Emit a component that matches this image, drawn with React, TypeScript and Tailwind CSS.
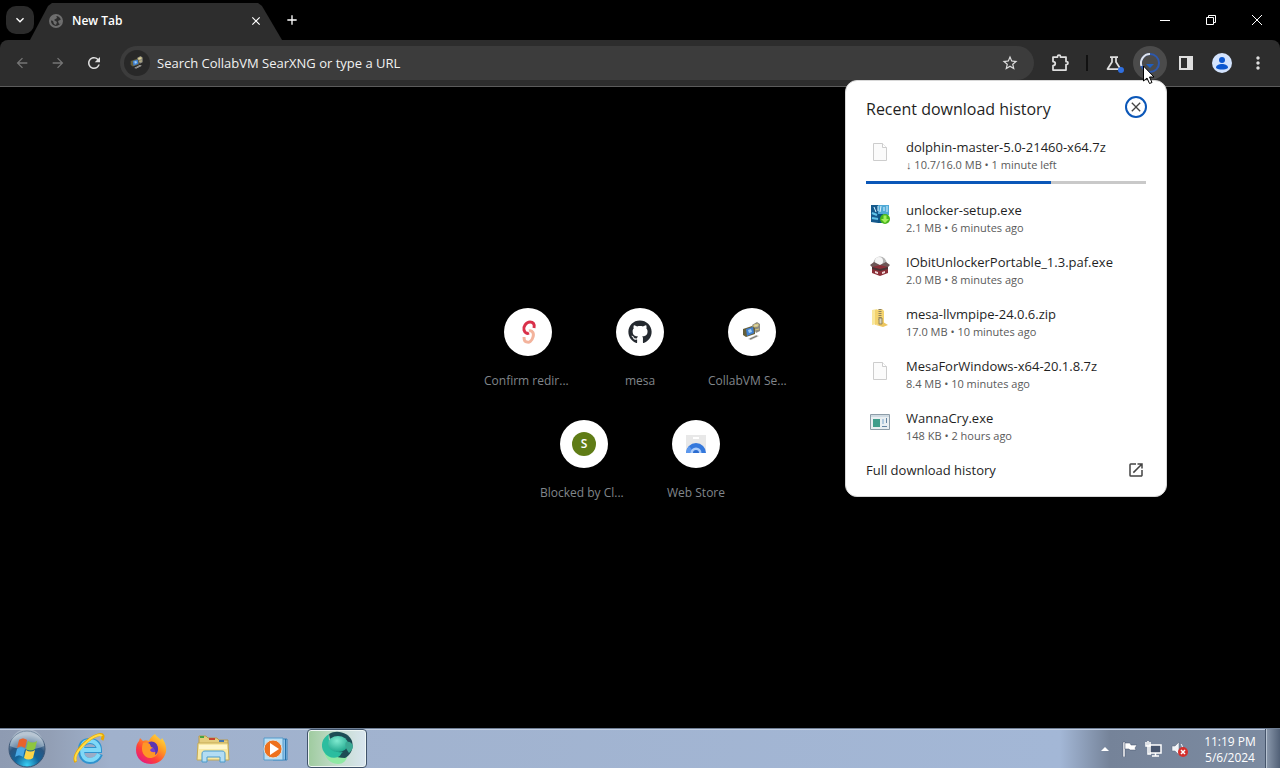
import type { ReactNode } from "react";
import { FaGithub } from "react-icons/fa";
import {
  MdAdd,
  MdArrowBack,
  MdArrowForward,
  MdClose,
  MdExpandMore,
  MdMoreVert,
  MdOpenInNew,
  MdRefresh,
  MdStarBorder,
} from "react-icons/md";

function ComputerLogo({ className }: { className: string }) {
  return (
    <svg viewBox="0 0 20 20" className={className} aria-hidden="true">
      <path d="M10 3l5-3 3 2v7l-4 2z" fill="#8d8b80" />
      <path d="M12 3l4-1v2l-4 1zM13 8l4-1" fill="#d8d3bb" stroke="#d5c77e" />
      <path d="M1 7l9-3 3 2v6l-9 3-3-2z" fill="#655f3a" />
      <path d="M4 7l7-2 1 6-7 3z" fill="#3f7fd2" />
      <path d="M6 8l3-1 1 3-3 1z" fill="#9fd0f4" />
      <path d="M6 17l8-4 3 1-8 4z" fill="#b9b8b3" />
      <path d="M8 17l7-3" stroke="#77766f" />
    </svg>
  );
}

function PageIcon() {
  return (
    <svg viewBox="0 0 20 20" className="size-5" aria-hidden="true">
      <path d="M3.500 2.500h9l4 4v13h-13z" fill="#fbfbfb" stroke="#cdcdcd" />
      <path d="M12.500 2.500v4h4" fill="#fff" stroke="#cdcdcd" />
    </svg>
  );
}

function SetupIcon() {
  return (
    <svg viewBox="0 0 20 20" className="size-5" aria-hidden="true">
      <path d="M1 1h7v18l-7-1z" fill="#155a8d" />
      <path d="M8 1h11v10H8z" fill="#4fa9d6" />
      <path d="M8 10h5v9H8z" fill="#0d5484" />
      <path d="M4 3l2 5M8 2v5M11 2l-1 6M14 3v4M17 2v6" stroke="#d8f2ff" />
      <path d="M2 9l5 2M2 14l6 1" stroke="#60c3e9" strokeWidth="2" />
      <circle cx="15" cy="15" r="5" fill="#48b61c" />
      <path d="M13.500 11.500h3V15H19l-4 4-4-4h2.500z" fill="#a3ef5c" />
    </svg>
  );
}

function BoxIcon() {
  return (
    <svg viewBox="0 0 20 20" className="size-5" aria-hidden="true">
      <circle cx="10" cy="7" r="6.500" fill="#b4b4b4" />
      <circle cx="9" cy="5" r="4" fill="#f5f5f5" />
      <path d="M0 9l4-3 6 3 6-3 4 3-3 3-7-2-7 2z" fill="#6d5656" />
      <path d="M2 11l8-2 8 2v6l-8 3-8-3z" fill="#8b2f38" />
      <path d="M2 11l8 2 8-2v2l-8 2-8-2z" fill="#463233" />
      <path d="M5 15l3 1v2l-3-1zM12 16l3-1v2l-3 1z" fill="#efd7d8" />
    </svg>
  );
}

function ZipIcon() {
  return (
    <svg viewBox="0 0 20 20" className="size-5" aria-hidden="true">
      <path d="M2 2l5-1v15l-5 1z" fill="#f9e79c" />
      <path d="M5 2l7-1 2 2v12l-9 2z" fill="#f3d36f" />
      <path d="M13 14l5 3-5 2-7-2z" fill="#edc65f" />
      <path d="M10 1v12" stroke="#8d8060" strokeWidth="3" strokeDasharray="1 1" />
      <path d="M9 10h3v6H9z" fill="#d7d2bd" stroke="#958455" />
    </svg>
  );
}

function ProgramIcon() {
  return (
    <svg viewBox="0 0 20 20" className="size-5" aria-hidden="true">
      <path d="M.5 2.500h19v15H.5z" fill="#e9eff2" stroke="#8d9da8" />
      <path d="M1 3h18v2H1z" fill="#cfdae2" />
      <path d="M3 7h7v8H3z" fill="#3f9d8b" />
      <path d="M12 7h2v5h-2z" fill="#b2cbdf" />
      <path d="M16.500 6v5M12 14.500h5" stroke="#6586a4" />
    </svg>
  );
}

type Download = {
  name: string;
  detail: string;
  icon: ReactNode;
  progress?: number;
};

const downloads: Download[] = [
  {
    name: "dolphin-master-5.0-21460-x64.7z",
    detail: "↓ 10.7/16.0 MB • 1 minute left",
    icon: <PageIcon />,
    progress: 66,
  },
  { name: "unlocker-setup.exe", detail: "2.1 MB • 6 minutes ago", icon: <SetupIcon /> },
  { name: "IObitUnlockerPortable_1.3.paf.exe", detail: "2.0 MB • 8 minutes ago", icon: <BoxIcon /> },
  { name: "mesa-llvmpipe-24.0.6.zip", detail: "17.0 MB • 10 minutes ago", icon: <ZipIcon /> },
  { name: "MesaForWindows-x64-20.1.8.7z", detail: "8.4 MB • 10 minutes ago", icon: <PageIcon /> },
  { name: "WannaCry.exe", detail: "148 KB • 2 hours ago", icon: <ProgramIcon /> },
];

const shortcuts: { label: string; icon: ReactNode; clipped?: boolean }[] = [
  {
    label: "Confirm redir...",
    clipped: true,
    icon: (
      <svg viewBox="0 0 24 24" className="size-6" fill="none" strokeWidth="3" aria-hidden="true">
        <path d="M13 11c4-1 5 3 4 6-1 4-4 6-6 5-2 0-3-2-3-5" stroke="#f3b39c" />
        <path d="M18 8c1-4-1-6-4-6-4 0-7 5-6 8 1 3 3 4 5 3" stroke="#d9304a" />
      </svg>
    ),
  },
  { label: "mesa", icon: <FaGithub className="size-6 text-[#24292f]" /> },
  { label: "CollabVM Se...", clipped: true, icon: <ComputerLogo className="size-5" /> },
  {
    label: "Blocked by Cl...",
    clipped: true,
    icon: (
      <span className="grid size-6 place-items-center rounded-full bg-[#5f7c16] text-xs font-semibold text-white">
        S
      </span>
    ),
  },
  {
    label: "Web Store",
    icon: (
      <svg viewBox="0 0 20 20" className="size-5" aria-hidden="true">
        <path d="M0 1h20v18H0z" fill="#e8e8e8" />
        <path d="M7 4h6" stroke="#fff" strokeWidth="2" />
        <path d="M0 19a10 10 0 0 1 20 0z" fill="#3478dc" />
        <path d="M0 19a10 10 0 0 1 3-7l4 5v2z" fill="#5c98ee" />
        <path d="M4.500 19a5.500 5.500 0 0 1 11 0z" fill="#a9cbfa" />
        <path d="M7 19a3 3 0 0 1 6 0z" fill="#2b6cd0" />
      </svg>
    ),
  },
];

function TabStrip() {
  return (
    <header className="flex h-10 items-center bg-black pl-1.5">
      <button
        aria-label="Search tabs"
        className="grid size-7 place-items-center rounded-[10px] bg-[#2b2b2b] text-white"
      >
        <MdExpandMore className="size-4 stroke-white" />
      </button>
      <div className="-ml-1 flex h-full w-[252px] items-end">
        <div className="flex h-[37px] w-full items-center bg-[#2d2d2d] pr-[19px] pb-0.5 pl-[18px] [clip-path:polygon(0_100%,18px_3px,22px_0,228px_0,232px_3px,100%_100%)]">
          <svg viewBox="0 0 16 16" className="size-4" aria-hidden="true">
            <circle cx="8" cy="8" r="6" fill="#2d2d2d" stroke="#6e6e6e" strokeWidth="2" />
            <path d="M3 4l5-2 1 3-3 2 3 2-1 3-2-1-1-3-3-1zM10 8l4-2v4l-3 1z" fill="#6e6e6e" />
          </svg>
          <span className="ml-2 flex-1 text-xs font-semibold text-white">New Tab</span>
          <button aria-label="Close tab" className="text-white">
            <MdClose className="size-3.5" />
          </button>
        </div>
      </div>
      <button aria-label="New tab" className="ml-0.5 text-white">
        <MdAdd className="size-4 stroke-white" />
      </button>
      <div className="ml-auto flex">
        <button aria-label="Minimize" className="grid h-10 w-[46px] place-items-center">
          <svg viewBox="0 0 12 12" className="size-3" aria-hidden="true">
            <path d="M1 6.500h10" stroke="#fff" />
          </svg>
        </button>
        <button aria-label="Restore" className="grid h-10 w-[46px] place-items-center">
          <svg viewBox="0 0 12 12" className="size-3" fill="none" stroke="#fff" aria-hidden="true">
            <path d="M1.500 3.500h7v7h-7zM3.500 3.500v-2h7v7h-2" />
          </svg>
        </button>
        <button aria-label="Close" className="grid h-10 w-[46px] place-items-center">
          <svg viewBox="0 0 12 12" className="size-3" stroke="#fff" aria-hidden="true">
            <path d="M1 1l10 10M11 1L1 11" />
          </svg>
        </button>
      </div>
    </header>
  );
}

function ToolButton({ label, children }: { label: string; children: ReactNode }) {
  return (
    <button aria-label={label} className="relative grid h-9 w-9 shrink-0 place-items-center text-[#dedede]">
      {children}
    </button>
  );
}

function Toolbar() {
  return (
    <nav className="relative flex h-[47px] shrink-0 items-center rounded-t-lg border-b border-[#5c5c5c] bg-[#2d2d2d] px-1">
      <ToolButton label="Back">
        <MdArrowBack className="size-4 text-[#757575]" />
      </ToolButton>
      <ToolButton label="Forward">
        <MdArrowForward className="size-4 text-[#757575]" />
      </ToolButton>
      <ToolButton label="Reload">
        <MdRefresh className="size-[18px] stroke-[#dedede]" />
      </ToolButton>
      <div className="mx-2 flex h-[34px] flex-1 items-center rounded-full bg-[#3c3c3c] pr-[15px] pl-1">
        <span className="grid size-[26px] place-items-center rounded-full bg-[#282828]">
          <ComputerLogo className="size-3.5" />
        </span>
        <input
          aria-label="Address and search bar"
          placeholder="Search CollabVM SearXNG or type a URL"
          className="ml-[7px] min-w-0 flex-1 bg-transparent pt-0.5 text-[13px] text-white outline-none placeholder:text-[#f1f1f1]"
        />
        <button aria-label="Bookmark this tab" className="text-[#dedede]">
          <MdStarBorder className="size-[18px]" />
        </button>
      </div>
      <ToolButton label="Extensions">
        <svg viewBox="0 0 20 20" className="size-5" fill="none" aria-hidden="true">
          <path
            d="M3 4h4.500V3.500a1.500 1.500 0 0 1 3 0V4H16v4.500h.5a1.500 1.500 0 0 1 0 3H16V17H3v-4.500c3 0 3-4 0-4z"
            stroke="#dedede"
            strokeWidth="1.750"
            strokeLinejoin="round"
          />
        </svg>
      </ToolButton>
      <span className="mx-2 h-4 w-0.5 bg-[#111]" />
      <ToolButton label="Experiments">
        <svg viewBox="0 0 16 16" className="size-4" fill="none" stroke="#dedede" strokeWidth="1.750" aria-hidden="true">
          <path d="M4 2h8M6 2v5l-4.500 7h13L10 7V2" strokeLinejoin="round" />
        </svg>
        <span className="absolute right-2 bottom-2 size-1.5 rounded-full bg-[#2f6fe0]" />
      </ToolButton>
      <ToolButton label="Downloads">
        <span className="grid size-[34px] place-items-center rounded-full bg-[#4b4b4b]">
          <svg viewBox="0 0 20 20" className="size-5" fill="none" aria-hidden="true">
            <circle cx="10" cy="10" r="9" stroke="#2d58ad" strokeWidth="2" />
            <path d="M10 1a9 9 0 0 0-8.500 12" stroke="#dfe3ec" strokeWidth="2" />
            <path d="M6 11h8l-4 4z" fill="#1c5fc4" />
          </svg>
        </span>
      </ToolButton>
      <ToolButton label="Side panel">
        <svg viewBox="0 0 16 16" className="size-4" aria-hidden="true">
          <path d="M2 2h12v12H2z" fill="none" stroke="#dedede" strokeWidth="2" />
          <path d="M9 2h5v12H9z" fill="#dedede" />
        </svg>
      </ToolButton>
      <ToolButton label="Profile">
        <svg viewBox="0 0 20 20" className="size-5" aria-hidden="true">
          <circle cx="10" cy="10" r="10" fill="#d3e3fd" />
          <circle cx="10" cy="7" r="3" fill="#0b57d0" />
          <path d="M4 15c0-3 3-4 6-4s6 1 6 4c-3 2-9 2-12 0z" fill="#0b57d0" />
        </svg>
      </ToolButton>
      <ToolButton label="Menu">
        <MdMoreVert className="size-5" />
      </ToolButton>
      <DownloadPanel />
    </nav>
  );
}

function DownloadPanel() {
  return (
    <section className="absolute top-10 right-[113px] z-10 w-[322px] rounded-xl border border-[#d8d8d8] bg-white px-5 pt-[15px] pb-4 text-[#1f1f1f]">
      <div className="-mr-px flex items-start justify-between">
        <h2 className="pt-px text-base leading-6">Recent download history</h2>
        <button
          aria-label="Close downloads"
          className="grid size-[22px] place-items-center rounded-full border-2 border-[#0b57b8] text-[#444]"
        >
          <MdClose className="size-4" />
        </button>
      </div>
      <ul className="mt-4">
        {downloads.map((d) => (
          <li key={d.name} className="mb-4">
            <div className="flex gap-4 pl-1">
              <span className="pt-1">{d.icon}</span>
              <div>
                <a href="#" className="block text-[13px] leading-5">
                  {d.name}
                </a>
                <p className="text-[11px] leading-4 text-[#5a5a5a]">{d.detail}</p>
              </div>
            </div>
            {d.progress && (
              <div className="mt-2 h-[3px] bg-[#c9c9c9]">
                <div className="h-full bg-[#0b57b8]" style={{ width: `${d.progress}%` }} />
              </div>
            )}
          </li>
        ))}
      </ul>
      <a href="#" className="flex items-center justify-between pr-px text-[13px] leading-5">
        Full download history
        <MdOpenInNew className="size-[18px] text-[#444]" />
      </a>
    </section>
  );
}

function NewTabPage() {
  return (
    <main className="flex flex-1 items-center justify-center bg-black pb-2">
      <div className="flex w-[336px] flex-wrap justify-center">
        {shortcuts.map((s) => (
          <a key={s.label} href="#" className="flex h-28 w-28 flex-col items-center pt-4">
            <span className="grid size-12 place-items-center rounded-full bg-white">{s.icon}</span>
            <span
              className={`mt-[15px] w-[88px] text-xs leading-5 whitespace-nowrap text-[#80868b] ${
                s.clipped ? "text-left" : "text-center"
              }`}
            >
              {s.label}
            </span>
          </a>
        ))}
      </div>
    </main>
  );
}

function StartOrb() {
  return (
    <svg viewBox="0 0 38 38" className="size-[38px]" aria-hidden="true">
      <defs>
        <radialGradient id="orb" cx="50%" cy="95%" r="85%">
          <stop offset="0" stopColor="#38d0f5" />
          <stop offset=".4" stopColor="#13649a" />
          <stop offset=".7" stopColor="#2b5680" />
          <stop offset="1" stopColor="#a3b3c4" />
        </radialGradient>
      </defs>
      <circle cx="19" cy="19" r="18" fill="url(#orb)" stroke="#3b5675" />
      <path d="M2 16a17 17 0 0 1 34 0c-8 4-24 5-34 0z" fill="#d7e3ec" opacity=".4" />
      <path d="M11 10c3-2 5-2 8 0l-2 8c-3-2-5-2-8 0z" fill="#e8622c" />
      <path d="M20 11c3 2 6 2 9 0l-2 8c-3 2-6 2-9 0z" fill="#8ec63f" />
      <path d="M9 19c3-2 5-2 8 0l-2 8c-3-2-5-2-8 0z" fill="#49a9e6" />
      <path d="M18 20c3 2 6 2 9 0l-2 8c-3 2-6 2-9 0z" fill="#fdd548" />
    </svg>
  );
}

function ExplorerLogo() {
  return (
    <svg viewBox="0 0 32 32" className="size-8" fill="none" aria-hidden="true">
      <path d="M27 21c-2 5-6 7-10 7-6 0-9-5-9-11S11 8 17 8s9 4 9 9H10" stroke="#2f93cf" strokeWidth="6" />
      <path d="M26 21c-2 4-5 6-9 6-5 0-8-4-8-10s3-9 8-9 9 4 9 9H10" stroke="#7fd8f7" strokeWidth="4" />
      <path d="M3 29C-1 24 7 13 17 6c6-4 12-6 13-3 0 1 0 2-1 4" stroke="#e9a800" strokeWidth="3" />
      <path d="M3 28C0 23 8 13 17 6c6-4 11-5 12-3" stroke="#ffdc45" strokeWidth="2" />
    </svg>
  );
}

function FirefoxLogo() {
  return (
    <svg viewBox="0 0 32 32" className="size-8" aria-hidden="true">
      <defs>
        <linearGradient id="fox" x1="1" y1="0" x2=".2" y2="1">
          <stop offset="0" stopColor="#fff04a" />
          <stop offset=".4" stopColor="#ff9a24" />
          <stop offset=".7" stopColor="#ff4138" />
          <stop offset="1" stopColor="#e31687" />
        </linearGradient>
      </defs>
      <path d="M20 1c1 2 4 4 6 6l1-2c3 4 5 9 4 14-2 8-8 12-15 12C7 31 1 25 1 17c0-4 1-7 3-9l1-3 3 3c2-1 4-1 6 0 1-3 3-5 6-7z" fill="url(#fox)" />
      <circle cx="16" cy="16" r="7" fill="#7540d0" />
      <path d="M8 10c3-1 6 0 8 2l4 1c-1 2-4 2-5 4 1 3 6 3 8 0 0 6-4 8-8 8-6 0-10-7-7-15z" fill="#ff9626" />
      <path d="M14 9c4-2 9 1 9 7 0 3-1 5-3 6 1-4 0-7-4-8z" fill="#5b35b1" />
    </svg>
  );
}

function FolderLogo() {
  return (
    <svg viewBox="0 0 34 32" className="h-8 w-[34px]" aria-hidden="true">
      <path d="M3 5V3h7l2 2h9l2 2h9v5H3z" fill="#e4cd7d" stroke="#b99b4f" />
      <path d="M4 4h4" stroke="#46a443" strokeWidth="2" />
      <path d="M13 6h6" stroke="#c9442f" strokeWidth="2" />
      <path d="M23 8h5" stroke="#4677ae" strokeWidth="2" />
      <path d="M2 10h30l1 17H1z" fill="#f8e9a4" stroke="#c5aa54" />
      <path d="M3 12h28v4H3z" fill="#fff7cc" />
      <path d="M6 29v-8c0-2 1-3 3-3h17c2 0 3 1 3 3v8h-5v-5H11v5z" fill="#b3ddf3" stroke="#4b9bcb" />
    </svg>
  );
}

function PlayerLogo() {
  return (
    <svg viewBox="0 0 28 28" className="size-7" aria-hidden="true">
      <path d="M12 4h14v21H12z" fill="#8dc1e8" stroke="#3d83b9" />
      <path d="M3 3h19v22H3z" fill="#b9dff4" stroke="#559bcb" />
      <path d="M24.500 4v21" stroke="#2571aa" />
      <circle cx="12" cy="14" r="9" fill="#ee711d" stroke="#d9dfdf" />
      <path d="M9 8l9 6-9 6z" fill="#fff" />
    </svg>
  );
}

function SwirlLogo() {
  return (
    <svg viewBox="0 0 34 34" className="size-[34px]" aria-hidden="true">
      <defs>
        <radialGradient id="ball" cx="45%" cy="30%" r="70%">
          <stop offset="0" stopColor="#7fead0" />
          <stop offset="1" stopColor="#22a98f" />
        </radialGradient>
      </defs>
      <path d="M4 18c0 9 7 15 14 15 5 0 8-3 9-7z" fill="#8fe9a4" />
      <path d="M9 3c8-5 20-1 23 7 2 7-1 14-7 17-5 0-9-1-12-3z" fill="#1d4d55" />
      <path d="M9 3C2 7 0 15 4 21c3 5 9 7 14 5 3-1 2-3 5-5-5 1-9-1-11-5C9 12 8 7 9 3z" fill="#2bbd9f" />
      <ellipse cx="18" cy="13" rx="10" ry="8" fill="url(#ball)" />
      <path d="M26 11c4-1 6 1 7 4 0 3-2 5-4 7-2-3-5-7-3-11z" fill="#3aa893" />
    </svg>
  );
}

const pinned = [
  { name: "Internet Explorer", icon: <ExplorerLogo /> },
  { name: "Firefox", icon: <FirefoxLogo /> },
  { name: "Windows Explorer", icon: <FolderLogo /> },
  { name: "Media Player", icon: <PlayerLogo /> },
];

function Taskbar() {
  return (
    <footer className="flex h-10 shrink-0 items-center border-t border-[#6f7f95] bg-[linear-gradient(to_right,#8e9bb2_0,#929fb5_50px,#a0b1cc_110px,#a3b7d6_calc(100%_-_220px),#758399_calc(100%_-_170px),#7c8ba1_100%)] shadow-[inset_0_1px_0_#c3d0e3]">
      <button aria-label="Start" className="grid w-[54px] place-items-center">
        <StartOrb />
      </button>
      <div className="ml-1 flex">
        {pinned.map((p) => (
          <button key={p.name} aria-label={p.name} className="grid h-[39px] w-[62px] place-items-center">
            {p.icon}
          </button>
        ))}
        <button
          aria-label="Browser"
          className="mx-px grid h-[39px] w-[60px] place-items-start justify-center rounded-sm border border-[#40536b] bg-linear-to-r from-[#9ecb9e] via-[#c5dccd] to-[#d9e5f0] pt-px shadow-[inset_0_0_0_1px_#eef6f4]"
        >
          <SwirlLogo />
        </button>
      </div>
      <div className="ml-auto flex h-full items-center">
        <button aria-label="Show hidden icons" className="mr-3">
          <svg viewBox="0 0 8 8" className="size-2" aria-hidden="true">
            <path d="M0 6l4-4 4 4z" fill="#fff" />
          </svg>
        </button>
        <button aria-label="Action center" className="mr-2">
          <svg viewBox="0 0 16 16" className="size-4" aria-hidden="true">
            <path d="M2 1h2v15H2z" fill="#fff" stroke="#45536a" strokeWidth=".5" />
            <path d="M4 2h5l1 2h6l-2 3 1 2H9L8 8H4z" fill="#fff" stroke="#45536a" strokeWidth=".5" />
          </svg>
        </button>
        <button aria-label="Network" className="mr-2">
          <svg viewBox="0 0 18 16" className="h-4 w-[18px]" fill="none" aria-hidden="true">
            <path d="M5 4h11v8H5z" fill="#48566e" stroke="#fff" strokeWidth="1.500" />
            <path d="M7 15h7M10.500 12v3M1 1v4h4V1M3 0v13h3" stroke="#fff" strokeWidth="1.500" />
          </svg>
        </button>
        <button aria-label="Volume" className="mr-2">
          <svg viewBox="0 0 18 16" className="h-4 w-[18px]" aria-hidden="true">
            <path d="M1 5h3l4-4v13l-4-4H1z" fill="#f2f4f7" stroke="#5b6678" strokeWidth=".5" />
            <path d="M10 3c2 2 2 7 0 9" fill="none" stroke="#fff" />
            <circle cx="12" cy="11" r="5" fill="#d4302d" />
            <path d="M10 9l4 4M14 9l-4 4" stroke="#fff" strokeWidth="1.500" />
          </svg>
        </button>
        <time className="w-[66px] pt-0.5 text-center text-xs leading-4 whitespace-nowrap text-white">
          11:19 PM
          <br />
          5/6/2024
        </time>
        <button
          aria-label="Show desktop"
          className="ml-0.5 h-full w-[15px] border-l border-[#46556b] bg-linear-to-r from-[#8d9bae] to-[#526177] shadow-[inset_1px_0_0_#b7c3d2]"
        />
      </div>
    </footer>
  );
}

export default function App() {
  return (
    <div className="flex min-h-screen flex-col bg-black font-['Open_Sans','Noto_Sans',sans-serif]">
      <TabStrip />
      <Toolbar />
      <NewTabPage />
      <Taskbar />
      {/* mouse pointer, resting on the downloads button */}
      <svg
        viewBox="0 0 12 19"
        className="pointer-events-none absolute top-[65px] right-[125px] z-20 h-[19px] w-3"
        aria-hidden="true"
      >
        <path d="M.5 1v15l3.500-3 2.500 5.500 2.500-1L6.500 12H11z" fill="#fff" stroke="#000" />
      </svg>
    </div>
  );
}
